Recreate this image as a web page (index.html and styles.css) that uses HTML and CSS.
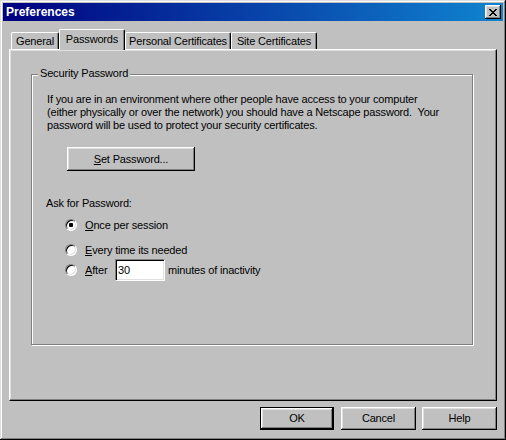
FILE: index.html
```html
<!DOCTYPE html>
<html>
<head>
<meta charset="utf-8">
<title>Preferences</title>
<link rel="stylesheet" href="styles.css">
</head>
<body>
<div class="window">
  <div class="titlebar">
    <span class="title">Preferences</span>
    <button class="close" aria-label="Close">
      <svg width="8" height="7" viewBox="0 0 8 7" shape-rendering="crispEdges">
        <path fill="#000" d="M0 0h2v1h-2zM6 0h2v1h-2zM1 1h2v1h-2zM5 1h2v1h-2zM2 2h4v1h-4zM3 3h2v1h-2zM2 4h4v1h-4zM1 5h2v1h-2zM5 5h2v1h-2zM0 6h2v1h-2zM6 6h2v1h-2z"/>
      </svg>
    </button>
  </div>
  <div class="content">
    <div class="tabs">
      <div class="tab tab-general">General</div>
      <div class="tab tab-selected tab-passwords">Passwords</div>
      <div class="tab tab-personal">Personal Certificates</div>
      <div class="tab tab-site">Site Certificates</div>
    </div>
    <div class="panel">
      <div class="group">
        <span class="legend">Security Password</span>
        <p class="intro">If you are in an environment where other people have access to your computer<br>(either physically or over the network) you should have a Netscape password.&nbsp; Your<br>password will be used to protect your security certificates.</p>
        <button class="btn btn-setpw"><u>S</u>et Password...</button>
        <div class="ask">Ask for Password:</div>
        <div class="options">
          <div class="opt opt-once"><span class="radio checked"></span><span><u>O</u>nce per session</span></div>
          <div class="opt opt-every"><span class="radio"></span><span><u>E</u>very time its needed</span></div>
          <div class="opt opt-after"><span class="radio"></span><span class="after-lbl"><u>A</u>fter</span><input class="field" value="30"><span class="minutes">minutes of inactivity</span></div>
        </div>
      </div>
    </div>
    <div class="actions">
      <button class="btn btn-default btn-ok">OK</button>
      <button class="btn btn-cancel">Cancel</button>
      <button class="btn btn-help">Help</button>
    </div>
  </div>
</div>
</body>
</html>
```

FILE: styles.css
```css
* { box-sizing: border-box; }
html, body { margin: 0; padding: 0; }
body {
  width: 506px;
  height: 440px;
  background: #c0c0c0;
  font-family: "Liberation Sans", Arial, sans-serif;
  font-size: 11px;
  line-height: 13px;
  letter-spacing: -0.17px;
  color: #000;
}
.window {
  width: 506px;
  height: 440px;
  padding: 3px;
  background: #c0c0c0;
  box-shadow: inset -1px -1px #000, inset 1px 1px #dfdfdf, inset -2px -2px #808080, inset 2px 2px #fff;
  display: flex;
  flex-direction: column;
}
.titlebar {
  height: 18px;
  flex: none;
  display: flex;
  align-items: center;
  padding: 0 2px 0 3px;
  background: linear-gradient(to right, #000080, #1084d0);
  color: #fff;
  font-weight: bold;
  font-size: 12px;
  letter-spacing: 0;
}
.title { flex: 1; }
.close {
  width: 16px;
  height: 14px;
  padding: 0 1px 0 0;
  border: none;
  background: #c0c0c0;
  box-shadow: inset -1px -1px #000, inset 1px 1px #fff, inset -2px -2px #808080, inset 2px 2px #dfdfdf;
  display: flex;
  align-items: center;
  justify-content: center;
}
.close svg { display: block; }
.content {
  flex: 1;
  padding: 8px 6px 0;
  display: flex;
  flex-direction: column;
}
.tabs {
  height: 20px;
  flex: none;
  display: flex;
  align-items: flex-end;
  padding-left: 2px;
}
.tab {
  height: 17px;
  padding: 2px 0 1px;
  text-align: center;
  white-space: nowrap;
  background: #c0c0c0;
  border-top: 1px solid #fff;
  border-left: 1px solid #fff;
  border-right: 1px solid #000;
  box-shadow: inset -1px 0 #808080;
  border-radius: 2px 2px 0 0;
}
.tab-general { width: 48px; }
.tab-passwords { width: 66px; }
.tab-personal { width: 106px; }
.tab-site { width: 86px; }
.tab-selected {
  height: 21px;
  padding-top: 3px;
  margin-bottom: -1px;
  position: relative;
  z-index: 1;
}
.panel {
  width: 488px;
  height: 352px;
  flex: none;
  background: #c0c0c0;
  border-top: 1px solid #fff;
  border-left: 1px solid #fff;
  border-right: 1px solid #000;
  border-bottom: 1px solid #000;
  box-shadow: inset -1px -1px #808080, inset 1px 1px #dfdfdf;
  padding: 24px 0 0 21px;
}
.group {
  position: relative;
  width: 442px;
  height: 271px;
  border: 1px solid #808080;
  box-shadow: inset 1px 1px #fff, 1px 1px #fff;
  padding: 18px 0 0 15px;
}
.legend {
  position: absolute;
  left: 6px;
  top: -8px;
  padding: 0 2px;
  background: #c0c0c0;
  white-space: nowrap;
}
.intro {
  margin: 0;
  white-space: nowrap;
}
.btn {
  font: inherit;
  letter-spacing: inherit;
  color: #000;
  background: #c0c0c0;
  border: none;
  padding: 0;
  box-shadow: inset -1px -1px #000, inset 1px 1px #fff, inset -2px -2px #808080, inset 2px 2px #dfdfdf;
}
.btn u, .opt u { text-decoration: underline; text-underline-offset: 1px; }
.btn-setpw {
  display: block;
  width: 128px;
  height: 24px;
  margin: 15px 0 0 20px;
}
.ask {
  margin: 26px 0 0 -1px;
}
.options {
  margin-left: 18px;
}
.opt {
  display: flex;
  align-items: center;
  height: 12px;
  white-space: nowrap;
}
.opt-once { margin-top: 9px; }
.opt-every { margin-top: 13px; }
.opt-after { margin-top: 3px; height: 22px; }
.radio {
  position: relative;
  flex: none;
  width: 12px;
  height: 12px;
  margin-right: 8px;
  border-radius: 50%;
  background: #fff;
  border: 1px solid;
  border-color: #808080 #fff #fff #808080;
  box-shadow: inset 1px 1px #000, inset -1px -1px #dfdfdf;
}
.radio.checked::after {
  content: "";
  position: absolute;
  left: 3px;
  top: 3px;
  width: 4px;
  height: 4px;
  border-radius: 1px;
  background: #000;
}
.after-lbl { width: 30px; flex: none; }
.field {
  width: 50px;
  height: 22px;
  flex: none;
  font: inherit;
  letter-spacing: inherit;
  color: #000;
  background: #fff;
  border: 1px solid;
  border-color: #808080 #fff #fff #808080;
  box-shadow: inset 1px 1px #000, inset -1px -1px #dfdfdf;
  padding: 0 0 0 2px;
  outline: none;
}
.minutes { margin-left: 3px; }
.actions {
  display: flex;
  justify-content: flex-end;
  margin-top: 6px;
}
.actions .btn { height: 23px; width: 75px; }
.btn-ok { margin-right: 7px; width: 74px !important; }
.btn-cancel { margin-right: 6px; }
.btn-default {
  border: 1px solid #000;
  box-shadow: inset -1px -1px #000, inset 1px 1px #fff, inset -2px -2px #808080, inset 2px 2px #dfdfdf;
}
```
